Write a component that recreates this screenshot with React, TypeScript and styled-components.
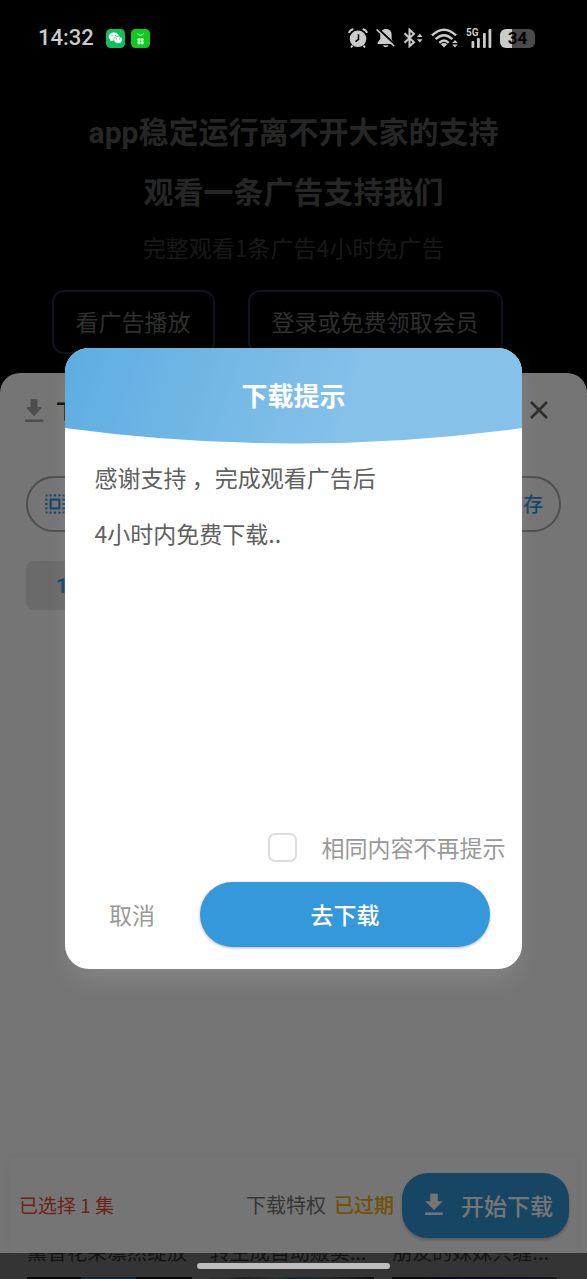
import React from "react";
import styled, { createGlobalStyle } from "styled-components";

const sans = `Roboto, "Noto Sans CJK SC", sans-serif`;
const accent = "#3498db";
const ink = "#cbcbcb";

const Global = createGlobalStyle`
  *, *::before, *::after { box-sizing: border-box; }
  body { margin: 0; background: #000; font-family: "Noto Sans CJK SC", sans-serif; }
  button { font: inherit; border: 0; margin: 0; padding: 0 0 2px; background: none; cursor: pointer; }
  h1, h2, p { margin: 0; }
  svg { display: block; flex: none; }
`;

const Screen = styled.div`
  position: relative;
  display: flex;
  flex-direction: column;
  min-height: 100vh;
  background: #000;
  overflow: hidden;
`;

const StatusBar = styled.header`
  position: relative;
  z-index: 2;
  display: flex;
  align-items: center;
  justify-content: space-between;
  height: 76px;
  padding: 0 52px 0 38px;
`;

const StatusGroup = styled.div<{ $gap: number }>`
  display: flex;
  align-items: center;
  gap: ${(p) => p.$gap}px;
`;

const Clock = styled.time`
  margin-right: 6px;
  color: ${ink};
  font: 500 22px/28px ${sans};
`;

const Battery = styled.div`
  width: 35px;
  height: 19px;
  border-radius: 6px;
  background: linear-gradient(90deg, ${ink} 12px, #4a4a4a 12px);
  color: #000;
  text-align: center;
  font: 700 17px/19px ${sans};
`;

const Promo = styled.section`
  display: flex;
  flex-direction: column;
  align-items: center;
  padding: 37px 0 19px;
  text-align: center;
`;

const PromoTitle = styled.h1`
  color: #535353;
  font: 700 30px/40px ${sans};
  & + & { margin-top: 20px; }
`;

const PromoNote = styled.p`
  margin-top: 20px;
  color: #363636;
  font-size: 23px;
  line-height: 28px;
`;

const PromoActions = styled.div`
  display: flex;
  margin-top: 29px;
`;

const OutlineButton = styled.button`
  && {
    height: 64px;
    margin-right: 33px;
    padding: 0 22px 2px;
    border: 2px solid #162e3d;
    border-radius: 12px;
    color: #686868;
    font-size: 23px;
    line-height: 28px;
  }
`;

const Sheet = styled.section`
  display: flex;
  flex: 1;
  flex-direction: column;
  border-radius: 20px 20px 0 0;
  background: #fff;
`;

const SheetHeader = styled.div`
  display: flex;
  align-items: center;
  gap: 12px;
  height: 76px;
  padding: 0 38px 0 24px;
`;

const HeaderMark = styled.span`
  color: #aaa;
`;

const SheetTitle = styled.h2`
  flex: 1;
  color: #222;
  font-size: 20px;
  font-weight: 700;
  line-height: 28px;
`;

const CacheBar = styled.button`
  && {
    display: flex;
    align-items: center;
    justify-content: space-between;
    height: 56px;
    margin: 27px 26px 0;
    padding: 0 16px 0 14px;
    border: 2px solid #aaa;
    border-radius: 28px;
    color: ${accent};
    font-size: 20px;
    font-weight: 500;
    line-height: 28px;
  }
`;

const Episodes = styled.div`
  display: flex;
  flex: 1;
  align-items: flex-start;
  padding: 29px 26px;
`;

const Episode = styled.button`
  && {
    width: 72px;
    height: 49px;
    padding: 0;
    border-radius: 8px;
    background: #e8e8e8;
    color: ${accent};
    font: 700 21px/28px ${sans};
  }
`;

const DownloadBar = styled.footer`
  display: flex;
  align-items: center;
  height: 96px;
  margin: 0 10px;
  padding: 0 8px 0 9px;
  background: #fff;
  box-shadow: 0 0 12px rgba(0, 0, 0, 0.05);
  font-size: 20px;
  line-height: 28px;
`;

const Selected = styled.span`
  flex: 1;
  color: #e74c3c;
  font-size: 19px;
`;

const Privilege = styled.span`
  color: #777;
`;

const Expired = styled.span`
  margin: 0 8px;
  color: #f1b40f;
  font-weight: 500;
`;

const StartButton = styled.button`
  && {
    display: flex;
    align-items: center;
    gap: 12px;
    height: 65px;
    padding: 0 16px 0 17px;
    border-radius: 26px;
    background: ${accent};
    box-shadow: 0 2px 3px rgba(0, 0, 0, 0.25);
    color: #fff;
    font-size: 23px;
    font-weight: 500;
    line-height: 28px;
  }
`;

const Backdrop = styled.div`
  display: flex;
  flex-direction: column;
  justify-content: flex-end;
  gap: 13px;
  position: relative;
  height: 26px;
  overflow: hidden;
  background: #727272;
`;

const Shows = styled.div`
  display: grid;
  flex: none;
  grid-template-columns: repeat(3, 1fr);
  gap: 18px;
  padding: 0 30px 0 27px;
`;

const ShowName = styled.span`
  height: 24px;
  color: #2a2a2a;
  font-size: 20px;
  line-height: 24px;
  white-space: nowrap;
`;

const Poster = styled.span<{ $paint: string }>`
  height: 2px;
  background: ${(p) => p.$paint};
`;

const HomeIndicator = styled.div`
  position: absolute;
  z-index: 2;
  right: 0;
  bottom: 10px;
  left: 0;
  width: 33%;
  height: 6px;
  margin: 0 auto;
  border-radius: 3px;
  background: #bdbdbd;
`;

const Scrim = styled.div`
  position: absolute;
  z-index: 1;
  inset: 0;
  display: flex;
  align-items: center;
  justify-content: center;
  padding-top: 38px;
  background: rgba(0, 0, 0, 0.54);
`;

const Dialog = styled.section`
  width: 78%;
  border-radius: 24px;
  background: #fff;
  overflow: hidden;
  box-shadow: 0 14px 24px -4px rgba(255, 255, 255, 0.12);
`;

const DialogHeader = styled.div`
  display: grid;
  height: 96px;
  > * { grid-area: 1 / 1; }
`;

const Wave = styled.svg`
  width: 100%;
  height: 96px;
`;

const DialogTitle = styled.h2`
  place-self: center;
  padding-bottom: 2px;
  color: #fff;
  font-size: 26px;
  font-weight: 700;
  line-height: 36px;
`;

const DialogText = styled.p`
  min-height: 389px;
  padding: 5px 30px 0;
  color: #606060;
  font-size: 23px;
  line-height: 56px;
`;

const Remember = styled.label`
  display: flex;
  align-items: center;
  justify-content: flex-end;
  gap: 24px;
  height: 29px;
  padding-right: 17px;
  color: #999;
  font-size: 23px;
  line-height: 28px;
`;

const RememberText = styled.span`
  padding-bottom: 2px;
`;

const CheckBox = styled.input`
  appearance: none;
  width: 29px;
  height: 29px;
  margin: 0;
  border: 2px solid #ddd;
  border-radius: 7px;
`;

const DialogActions = styled.div`
  display: grid;
  grid-template-columns: 135px 1fr;
  padding: 20px 32px 22px 0;
  font-size: 23px;
  line-height: 28px;
`;

const CancelButton = styled.button`
  color: #999;
`;

const ConfirmButton = styled.button`
  && {
    height: 65px;
    border-radius: 33px;
    background: ${accent};
    box-shadow: 0 1px 3px rgba(0, 0, 0, 0.3);
    color: #fff;
    font-weight: 500;
  }
`;

const TrayIcon = () => (
  <svg width="20" height="24" viewBox="0 0 20 24" fill="currentColor">
    <path d="M6.500 1.200Q6.500 0 7.700 0H12.300Q13.500 0 13.500 1.200V8H16.800Q18.200 8 17.200 9.200L10.800 16.500Q10 17.300 9.200 16.500L2.800 9.200Q1.800 8 3.200 8H6.500Z" />
    <rect x="1" y="20.500" width="18.500" height="2.400" rx="0.600" />
  </svg>
);

const DownloadIcon = () => (
  <svg width="30" height="30" viewBox="0 0 24 24" fill="currentColor">
    <path d="M19 9h-4V3H9v6H5l7 7 7-7zM5 18v2h14v-2H5z" />
  </svg>
);

const SelectAllIcon = () => (
  <svg width="26" height="26" viewBox="0 0 24 24" fill="currentColor">
    <path d="M3 5h2V3c-1.100 0-2 .9-2 2zm0 8h2v-2H3v2zm4 8h2v-2H7v2zM3 9h2V7H3v2zm10-6h-2v2h2V3zm6 0v2h2c0-1.100-.9-2-2-2zM5 21v-2H3c0 1.100.9 2 2 2zm-2-4h2v-2H3v2zM9 3H7v2h2V3zm2 18h2v-2h-2v2zm8-8h2v-2h-2v2zm0 8c1.100 0 2-.9 2-2h-2v2zm0-12h2V7h-2v2zm0 8h2v-2h-2v2zm-4 4h2v-2h-2v2zm0-16h2V3h-2v2zM7 17h10V7H7v10zm2-8h6v6H9V9z" />
  </svg>
);

const WeChatIcon = () => (
  <svg width="19" height="19" viewBox="0 0 19 19">
    <rect width="19" height="19" rx="4.500" fill="#0fbf5c" />
    <path d="M7.800 3.600C4.900 3.600 2.700 5.400 2.700 7.700c0 1.300.7 2.400 1.800 3.200l-.4 1.600 1.900-1c.6.2 1.200.3 1.800.3 2.900 0 5.100-1.800 5.100-4.100S10.700 3.600 7.800 3.600z" fill="#fff" />
    <path d="M12 7.300c-2.400 0-4.300 1.500-4.300 3.500s1.900 3.500 4.300 3.500c.5 0 1-.1 1.400-.2l1.600.8-.4-1.300c1-.7 1.600-1.700 1.600-2.800 0-2-1.800-3.500-4.200-3.500z" fill="#fff" stroke="#0fbf5c" strokeWidth=".6" />
    <g fill="#0fbf5c"><circle cx="6.100" cy="6.600" r=".7" /><circle cx="9.400" cy="6.600" r=".7" /><circle cx="10.600" cy="10" r=".6" /><circle cx="13.500" cy="10" r=".6" /></g>
  </svg>
);

const CloverIcon = () => (
  <svg width="19" height="19" viewBox="0 0 19 19">
    <rect width="19" height="19" rx="4.500" fill="#0ccb1d" />
    <path d="M6 4.300Q9.500 8.300 13 4.300" fill="none" stroke="#a9f0ae" strokeWidth="1" />
    <g fill="#c9f7cb"><circle cx="8" cy="10.600" r="1.700" /><circle cx="11.200" cy="10.600" r="1.700" /><circle cx="8" cy="13.700" r="1.700" /><circle cx="11.200" cy="13.700" r="1.700" /></g>
  </svg>
);

const AlarmIcon = () => (
  <svg width="20" height="20" viewBox="0 0 20 20">
    <circle cx="10" cy="10.800" r="8.300" fill={ink} />
    <path d="M.8 4.800Q2 2 5.300 1M19.200 4.800Q18 2 14.700 1M4.500 17.500L3 19.500M15.500 17.500L17 19.500" fill="none" stroke={ink} strokeWidth="2" />
    <path d="M10.500 6.200V11.300L7.500 13.600" fill="none" stroke="#000" strokeWidth="1.500" />
  </svg>
);

const BellOffIcon = () => (
  <svg width="19" height="20" viewBox="0 0 19 20">
    <path d="M10 1c-3.600 0-5.700 2.400-5.700 5.600v4.400L1.600 14.400v1.600h16v-1.600L15.600 11V6.600C15.600 3.400 13.600 1 10 1z" fill={ink} />
    <path d="M7 17.300h5.400q-.7 2-2.700 2t-2.700-2z" fill={ink} />
    <path d="M1.800 .4L19.500 17" stroke="#000" strokeWidth="2" />
    <path d="M.6 1.500L18 18" stroke={ink} strokeWidth="1.700" />
  </svg>
);

const BluetoothIcon = () => (
  <svg width="20" height="20" viewBox="0 0 20 20">
    <path d="M1.500 5.300L11 14.300L6.500 18.300V1.700L11 5.700L1.500 14.700" fill="none" stroke={ink} strokeWidth="2" />
    <path d="M14 9L16.800 5.800L19.600 9zM14 11.200L16.800 14.400L19.600 11.200z" fill={ink} />
  </svg>
);

const WifiIcon = () => (
  <svg width="27" height="20" viewBox="0 0 27 20">
    <g fill="none" stroke={ink} strokeWidth="2.400">
      <path d="M1 7.400Q13 -4 25 7.400" />
      <path d="M4.600 11.200Q13 3.300 21.400 11.200" />
      <path d="M8.300 14.800Q13 10.400 17.700 14.800" />
    </g>
    <path d="M9.800 16.300Q13 13.600 16.200 16.300L13 19.500z" fill={ink} />
    <path d="M21.200 15L24 12L26.800 15zM21.200 16.600L24 19.600L26.800 16.600z" fill={ink} />
  </svg>
);

const SignalIcon = () => (
  <svg width="26" height="20" viewBox="0 0 26 20" fill={ink}>
    <text x="0" y="8" fontFamily="Roboto, sans-serif" fontSize="10" fontWeight="700">5G</text>
    <rect x="5.500" y="13" width="2.800" height="7" rx="1" />
    <rect x="11" y="10" width="2.800" height="10" rx="1" />
    <rect x="17" y="5" width="2.800" height="15" rx="1" />
    <rect x="22.500" y="1" width="2.800" height="19" rx="1" />
  </svg>
);

const CloseIcon = () => (
  <svg width="20" height="20" viewBox="0 0 20 20" stroke="#616161" strokeWidth="2.600" fill="none">
    <path d="M2 2L18 18M18 2L2 18" />
  </svg>
);

const shows = [
  { name: "薰香花朵凛然绽放", paint: "linear-gradient(90deg, #111 33%, #2b4a68 33% 66%, #111 66%)" },
  { name: "转生成自动贩卖...", paint: "linear-gradient(90deg, #666 10%, #444 20%, #666 40%, #2f5560 50%, #555 70%, #222)" },
  { name: "朋友的妹妹只缠...", paint: "linear-gradient(90deg, #151515 20%, #1c1c50 45%, #2b1c50 80%, #333)" },
];

export default function App() {
  return (
    <Screen>
      <Global />
      <StatusBar>
        <StatusGroup $gap={6}>
          <Clock>14:32</Clock>
          <WeChatIcon />
          <CloverIcon />
        </StatusGroup>
        <StatusGroup $gap={8}>
          <AlarmIcon />
          <BellOffIcon />
          <BluetoothIcon />
          <WifiIcon />
          <SignalIcon />
          <Battery>34</Battery>
        </StatusGroup>
      </StatusBar>

      <Promo>
        <PromoTitle>app稳定运行离不开大家的支持</PromoTitle>
        <PromoTitle as="h2">观看一条广告支持我们</PromoTitle>
        <PromoNote>完整观看1条广告4小时免广告</PromoNote>
        <PromoActions>
          <OutlineButton>看广告播放</OutlineButton>
          <OutlineButton>登录或免费领取会员</OutlineButton>
        </PromoActions>
      </Promo>

      <Sheet>
        <SheetHeader>
          <HeaderMark><TrayIcon /></HeaderMark>
          <SheetTitle>下载</SheetTitle>
          <button aria-label="关闭"><CloseIcon /></button>
        </SheetHeader>
        <CacheBar>
          <SelectAllIcon />
          <span>缓存</span>
        </CacheBar>
        <Episodes>
          <Episode>1</Episode>
        </Episodes>
        <DownloadBar>
          <Selected>已选择 1 集</Selected>
          <Privilege>下载特权</Privilege>
          <Expired>已过期</Expired>
          <StartButton>
            <DownloadIcon />
            开始下载
          </StartButton>
        </DownloadBar>
      </Sheet>

      <Backdrop>
        <Shows>
          {shows.map((s) => <ShowName key={s.name}>{s.name}</ShowName>)}
        </Shows>
        <Shows>
          {shows.map((s) => <Poster key={s.name} $paint={s.paint} />)}
        </Shows>
      </Backdrop>

      <Scrim>
        <Dialog role="dialog" aria-modal="true" aria-labelledby="dialog-title">
          <DialogHeader>
            <Wave viewBox="0 0 458 96" preserveAspectRatio="none" aria-hidden="true">
              <defs>
                <linearGradient id="sky" gradientUnits="userSpaceOnUse" x1="0" y1="0" x2="270" y2="95">
                  <stop offset="0" stopColor="#5dade2" />
                  <stop offset="1" stopColor="#85c1e9" />
                </linearGradient>
              </defs>
              <path d="M0 0H458V80Q229 111 0 80Z" fill="url(#sky)" />
            </Wave>
            <DialogTitle id="dialog-title">下载提示</DialogTitle>
          </DialogHeader>
          <DialogText>
            感谢支持 ，完成观看广告后
            <br />
            4小时内免费下载..
          </DialogText>
          <Remember>
            <CheckBox type="checkbox" />
            <RememberText>相同内容不再提示</RememberText>
          </Remember>
          <DialogActions>
            <CancelButton>取消</CancelButton>
            <ConfirmButton>去下载</ConfirmButton>
          </DialogActions>
        </Dialog>
      </Scrim>
      <HomeIndicator />
    </Screen>
  );
}
